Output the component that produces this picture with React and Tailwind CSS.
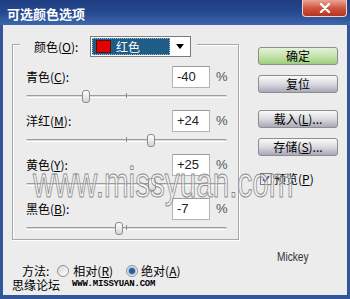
import React from 'react'

const cjk = "font-['Noto_Sans_CJK_SC','Noto_Sans',sans-serif]"
const arial = "font-['Liberation_Sans',Arial,sans-serif]"

const rows = [
  { label: '青色', key: 'C', value: -40 },
  { label: '洋红', key: 'M', value: 24 },
  { label: '黄色', key: 'Y', value: 25 },
  { label: '黑色', key: 'B', value: -7 },
]

function Slider({ value }) {
  const pct = ((value + 100) / 200) * 100
  return (
    <div className="relative h-[17px] w-[201px] flex items-center">
      <div className="h-[3px] w-full rounded-full border-t border-t-[#9c9c9c] border-b border-b-white bg-[#dcdcdc]" />
      <div className="absolute left-[100px] top-[5px] h-[5px] w-px bg-[#8c8c8c]" />
      <div
        className="absolute top-[2px] -ml-[4px] h-[13px] w-[8px] rounded-[3px] border border-[#8a8a8a] bg-linear-to-b from-white to-[#d6d6d6]"
        style={{ left: `${pct}%` }}
      />
    </div>
  )
}

function Button({ children, primary }) {
  return (
    <div
      className={
        'h-[18px] w-[80px] flex items-center justify-center rounded-[3px] border border-[#8d8d8d] text-[12px] text-black ' +
        cjk +
        (primary
          ? ' bg-linear-to-b from-[#e4f2d8] via-[#c6e4ae] to-[#9ccf7c]'
          : ' bg-linear-to-b from-[#fbfbfb] via-[#d9d9df] to-[#a9a9b9]')
      }
    >
      {children}
    </div>
  )
}

function Radio({ checked }) {
  return (
    <span className="h-[12px] w-[12px] rounded-full border border-[#8f8f8f] bg-linear-to-br from-[#d8d8d8] to-white flex items-center justify-center">
      {checked && <span className="h-[6px] w-[6px] rounded-full bg-[#2a5f9e] shadow-[0_0_0_1px_#9cc0e0]" />}
    </span>
  )
}

export default function App() {
  return (
    <div className="relative w-[350px] h-[299px] flex flex-col overflow-hidden bg-[#33569a]">
      {/* title bar */}
      <div className="h-[25px] flex items-start justify-between bg-linear-to-b from-[#1f3d80] via-[#27498f] to-[#3d67ae]">
        <span className={'ml-[7px] mt-[5px] text-[13px] leading-[17px] font-bold text-white ' + cjk}>可选颜色选项</span>
        <div className="mr-[3px] h-[17px] w-[45px] rounded-b-[4px] border border-t-0 border-[#f3d2cc] bg-linear-to-b from-[#e9a596] via-[#cf5641] to-[#b53420] flex items-center justify-center">
          <svg width="12" height="10" viewBox="0 0 12 10">
            <path d="M2 1 L10 9 M10 1 L2 9" stroke="white" strokeWidth="2.4" strokeLinecap="round" />
          </svg>
        </div>
      </div>

      {/* body */}
      <div className={'flex-1 mx-[3px] mb-[4px] flex bg-[#ececec] text-[12px] text-black ' + cjk}>
        <div className="w-[255px] pl-[9px] pt-[19px] flex flex-col">
          <div className="w-[227px] border border-[#a7a7a7] shadow-[inset_1px_1px_0_white,1px_1px_0_white] pb-[2px]">
            <div className="-mt-[9px] ml-[7px] w-[177px] h-[21px] flex items-center bg-[#ececec]">
              <span className="ml-[14px] w-[56px] leading-none">
                颜色(<u>O</u>):
              </span>
              <div className="h-[21px] w-[101px] flex items-center border border-[#7c7c7c] bg-white">
                <div className="ml-[1px] h-[17px] w-[78px] flex items-center bg-[#1f5c86] outline-1 outline-dotted outline-[#9ab6cc] -outline-offset-1">
                  <span className="ml-[4px] h-[13px] w-[15px] bg-[#e40000] border border-[#5a1010]" />
                  <span className="ml-[5px] text-white leading-none">红色</span>
                </div>
                <div className="flex-1 flex items-center justify-center">
                  <svg width="8" height="5" viewBox="0 0 8 5">
                    <path d="M0 0 H8 L4 5 Z" fill="black" />
                  </svg>
                </div>
              </div>
            </div>

            <div className="mt-[9px] flex flex-col gap-[5px]">
              {rows.map(r => (
                <div key={r.key} className="flex flex-col">
                  <div className="h-[22px] pl-[13px] flex items-center">
                    <span className="w-[146px] leading-none">
                      {r.label}(<u>{r.key}</u>):
                    </span>
                    <div className={'h-[22px] w-[38px] flex items-center pl-[4px] border border-[#b4b4b4] border-t-[#9a9a9a] bg-white text-[13px] text-[#222] ' + arial}>
                      {r.value > 0 ? `+${r.value}` : r.value}
                    </div>
                    <span className={'ml-[6px] text-[13px] text-[#555] ' + arial}>%</span>
                  </div>
                  <div className="pl-[13px]">
                    <Slider value={r.value} />
                  </div>
                </div>
              ))}
            </div>
          </div>

          <div className="mt-[24px] ml-[10px] h-[14px] flex items-center">
            <span>方法:</span>
            <span className="ml-[8px]"><Radio /></span>
            <span className="ml-[4px]">相对(<u>R</u>)</span>
            <span className="ml-[13px]"><Radio checked /></span>
            <span className="ml-[3px]">绝对(<u>A</u>)</span>
          </div>
          <div className="h-[13px] flex items-center">
            <span className="leading-none">思缘论坛</span>
            <span className="ml-[12px] font-['Liberation_Mono',monospace] text-[9px] font-bold leading-none tracking-[-0.2px]">
              WWW.MISSYUAN.COM
            </span>
          </div>
        </div>

        <div className="pt-[22px] flex flex-col">
          <Button primary>确定</Button>
          <div className="mt-[10px]"><Button>复位</Button></div>
          <div className="mt-[17px]"><Button>载入(<u>L</u>)...</Button></div>
          <div className="mt-[10px]"><Button>存储(<u>S</u>)...</Button></div>
          <div className="mt-[17px] ml-[2px] h-[12px] flex items-center">
            <span className="h-[12px] w-[12px] border border-[#7a7a7a] bg-linear-to-br from-[#dcdcdc] to-white flex items-center justify-center">
              <svg width="8" height="8" viewBox="0 0 8 8">
                <path d="M1 4 L3 6.5 L7 1" stroke="#3b4f8a" strokeWidth="1.6" fill="none" />
              </svg>
            </span>
            <span className="ml-[2px] leading-none">预览(<u>P</u>)</span>
          </div>
          <span className={'mt-[65px] ml-[19px] text-[13px] text-[#333] leading-none origin-left scale-x-[0.78] ' + arial}>
            Mickey
          </span>
        </div>
      </div>

      {/* watermark */}
      <span
        className={'pointer-events-none absolute left-[33px] top-[161px] text-[43px] leading-none origin-left scale-x-[0.69] text-white/40 [-webkit-text-stroke:1px_#8a8a8a] ' + arial}
      >
        www.missyuan.com
      </span>
    </div>
  )
}
